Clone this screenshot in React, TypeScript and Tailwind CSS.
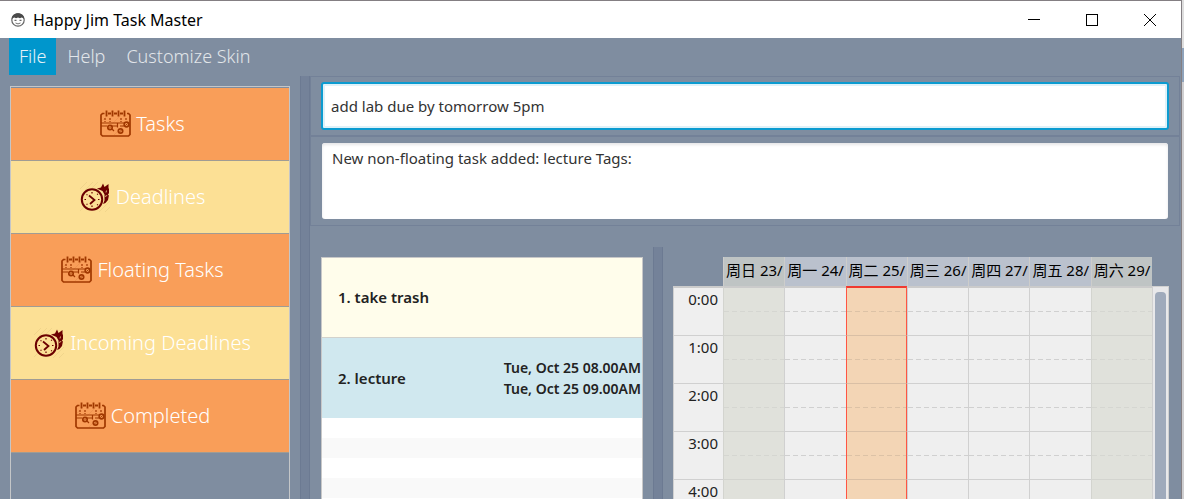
import React, { useState } from "react";

const menus = ["File", "Help", "Customize Skin"];

const categories = [
  { label: "Tasks", icon: "calendar" },
  { label: "Deadlines", icon: "clock" },
  { label: "Floating Tasks", icon: "calendar" },
  { label: "Incoming Deadlines", icon: "clock" },
  { label: "Completed", icon: "calendar" },
];

const days = [
  { label: "周日 23/", kind: "weekend" },
  { label: "周一 24/", kind: "weekday" },
  { label: "周二 25/", kind: "today" },
  { label: "周三 26/", kind: "weekday" },
  { label: "周四 27/", kind: "weekday" },
  { label: "周五 28/", kind: "weekday" },
  { label: "周六 29/", kind: "weekend" },
];

const hours = ["0:00", "1:00", "2:00", "3:00", "4:00"];

const headStyles: Record<string, string> = {
  weekend: "bg-[#bfc4c4] border-[#cdcdcb]",
  weekday: "bg-[#bac1cd] border-[#cdcdcb]",
  today: "bg-[#bac1cd] border-[#cdcdcb]",
};

const cellStyles: Record<string, string> = {
  weekend:
    "bg-[#e0e1db] border-[#d3d4cf] bg-[repeating-linear-gradient(90deg,#d5d6d1_0_5px,transparent_5px_8px)]",
  weekday:
    "bg-[#efefef] border-[#d0d0d0] bg-[repeating-linear-gradient(90deg,#d0d0d0_0_5px,transparent_5px_8px)]",
  today:
    "bg-[#f3d5b5] border-b-[#d9bfa5] border-l-[#ff5544] border-r-[#ff5544] border-r bg-[repeating-linear-gradient(90deg,#dcc2a6_0_5px,transparent_5px_8px)]",
};

const firstRowStyles: Record<string, string> = {
  weekend: "border-t-2 border-t-[#cbcbcb]",
  weekday: "border-t-2 border-t-[#cbcbcb]",
  today: "border-t-2 border-t-[#f03a30]",
};

function FaceIcon() {
  return (
    <svg viewBox="0 0 14 14" className="size-[14px]" aria-hidden="true">
      <circle cx="7" cy="7" r="6.2" fill="#fff" stroke="#666" strokeWidth="1.2" />
      <path d="M0.6 6.500C0.6 2.500 3.500 0.300 7 0.300s6.400 2.200 6.400 6.200L12 5 10.500 4.500 9 5.200 7 4.600 5 5.200 3.500 4.500 2 5Z" fill="#4a4a4a" />
      <path d="M3.500 7.300h2M8.500 7.300h2" stroke="#666" strokeWidth="1.200" />
      <path d="M4.500 10q2.500 1.800 5 0" stroke="#777" fill="none" strokeWidth="1" />
    </svg>
  );
}

function CalendarIcon() {
  return (
    <svg viewBox="0 0 31 30" className="h-[30px] w-[31px] shrink-0" fill="none" stroke="#a03800" aria-hidden="true">
      <path d="M2 12L12 2M7 20L21 6M14 26L28 12" stroke="#ef9551" strokeWidth="1" />
      <path d="M4.500 4.500H2.500L1 6V25.500L2.500 27H28.500L30 25.500V6L28.500 4.500H27" strokeWidth="1.700" />
      <path d="M6.500 1.500v6M12.500 1.500v6M18.500 1.500v6M24.500 1.500v6" strokeWidth="1.800" />
      <path d="M8 4.500h3M14 4.500h3M20 4.500h3" strokeWidth="1.800" />
      <path d="M5 9v4M10 9v4M21 9v4M26 9v3" strokeWidth="1.200" strokeDasharray="2 1" />
      <path d="M1 14H25M1 17H7M12 17H18M17.500 14V18.500M20 17H24M12 20l2 2" strokeWidth="1.200" />
      <circle cx="10" cy="18.500" r="2.200" strokeWidth="1.700" />
      <circle cx="20.500" cy="22" r="2.200" strokeWidth="1.700" />
      <circle cx="26.500" cy="15.500" r="2.300" strokeWidth="1.700" />
      <path d="M9 19.500l2-2M19.500 23l2-2M25.500 16.500l2-2" strokeWidth="0.900" />
    </svg>
  );
}

function ClockIcon() {
  return (
    <svg viewBox="0 0 31 30" className="h-[30px] w-[31px] shrink-0" fill="none" stroke="#6b0000" aria-hidden="true">
      <path d="M0 7L7 0M5 8L13 0M12 6L18 0M0 29L5 24M19 30L30 19M25 30L30 25" stroke="#f1d58b" strokeWidth="1" />
      <circle cx="12" cy="17.500" r="10.200" strokeWidth="2" />
      <path d="M9 13.500L14.500 18L10 22" strokeWidth="1.800" />
      <path d="M12 10v1.500M12 23.500V25M4.500 17.500H6M18 17.500h1.500M6.500 12.500l1 .5M17 12.500l1-.5M6.500 22.500l1-.5M17 22.500l1 .5" strokeWidth="1.200" />
      <path
        d="M17 6.500L21 5.500L23 1.500L24.500 5L28.500 2V7L29 6L29 11L27.500 13.500L29 13L28 18L25.500 21L23 22L24.500 18.500V12.500L22.500 9L19 7.500Z"
        fill="#6b0000"
        stroke="none"
      />
      <path d="M26.500 8.500l-.5 2M26.500 13l-1 2" stroke="#fce095" strokeWidth="0.800" />
    </svg>
  );
}

function TitleBar() {
  const control = "flex h-full w-[58px] items-center justify-center";
  return (
    <header className="flex h-[38px] shrink-0 items-center border-t border-[#847f83] bg-white pr-[2px] pl-[11px]">
      <FaceIcon />
      <h1 className="ml-2 flex-1 text-base text-black">Happy Jim Task Master</h1>
      <button type="button" aria-label="Minimize" className={control}>
        <svg viewBox="0 0 12 12" className="size-3" stroke="#000" shapeRendering="crispEdges"><path d="M0 5.500h12" /></svg>
      </button>
      <button type="button" aria-label="Maximize" className={control}>
        <svg viewBox="0 0 12 12" className="size-3" stroke="#000" fill="none" shapeRendering="crispEdges"><path d="M.5.5h11v11H.5z" /></svg>
      </button>
      <button type="button" aria-label="Close" className={control}>
        <svg viewBox="0 0 12 12" className="size-3" stroke="#000"><path d="M0 0l12 12M12 0L0 12" /></svg>
      </button>
    </header>
  );
}

function Sidebar() {
  return (
    <nav className="mx-[10px] mt-[10px] w-[280px] shrink-0 border border-b-0 border-[#c4c6c8] pt-px">
      {categories.map(({ label, icon }, i) => (
        <button
          key={label}
          type="button"
          className={`flex h-[73px] w-full items-center justify-center gap-[5px] border-b border-[#a09c94] pr-[15px] text-xl font-light text-white ${
            i % 2 ? "bg-[#fce095]" : "bg-[#f99e59]"
          }`}
        >
          {icon === "clock" ? <ClockIcon /> : <CalendarIcon />}
          {label}
        </button>
      ))}
    </nav>
  );
}

function TaskList() {
  return (
    <ul className="mt-[31px] mr-[10px] ml-[11px] w-[322px] shrink-0 border border-b-0 border-[#c8c8c8] bg-[repeating-linear-gradient(#fff_0_20px,#f9f9f9_20px_40px)] text-[15px] font-semibold text-[#222]">
      <li className="flex h-20 items-center border-b border-[#d2d2cc] bg-[#fffdeb] pl-4">1. take trash</li>
      <li className="flex h-20 items-center justify-between bg-[#d0e8ef] pr-px pl-4">
        <span>2. lecture</span>
        <span className="text-sm leading-[21px]">
          Tue, Oct 25 08.00AM
          <br />
          Tue, Oct 25 09.00AM
        </span>
      </li>
    </ul>
  );
}

function WeekCalendar() {
  return (
    <section className="mt-[31px] mr-3 ml-[10px] flex min-w-0 flex-1">
      <div className="min-w-0 flex-1">
        <table className="w-full table-fixed border-separate border-spacing-0">
          <thead>
            <tr className="h-[29px]">
              <td className="w-[50px]" />
              {days.map(({ label, kind }) => (
                <th
                  key={label}
                  scope="col"
                  className={`border-l p-0 pl-[2px] text-left align-top text-[15px] leading-[26px] font-normal whitespace-nowrap text-black ${headStyles[kind]}`}
                >
                  {label}
                </th>
              ))}
            </tr>
          </thead>
          <tbody>
            {hours.map((hour, i) => (
              <tr key={hour} className={i === 0 ? "h-[50px]" : "h-12"}>
                <th
                  scope="row"
                  className={`border-b border-l border-[#d0d0d0] bg-[#efefef] p-0 pt-px pr-[5px] text-right align-top text-[15px] leading-5 font-normal text-[#222] ${i === 0 ? "border-t-2 border-t-[#cbcbcb]" : ""}`}
                >
                  {hour}
                </th>
                {days.map(({ label, kind }) => (
                  <td
                    key={label}
                    className={`border-b border-l bg-[length:100%_1px] bg-[position:left_bottom_23px] bg-no-repeat p-0 ${cellStyles[kind]} ${
                      i === 0 ? firstRowStyles[kind] : ""
                    }`}
                  />
                ))}
              </tr>
            ))}
          </tbody>
        </table>
      </div>
      <div className="mt-[29px] w-[17px] shrink-0 border-t border-r border-l border-[#d0d0d0] bg-[#e8e8ea] px-[2px] pt-[5px]">
        <div className="h-full rounded-t-sm bg-[#9faabb]" />
      </div>
    </section>
  );
}

export default function App() {
  const [command, setCommand] = useState("add lab due by tomorrow 5pm");
  return (
    <div className="flex h-screen overflow-hidden bg-[#cfcfd1] font-['Noto_Sans','Noto_Sans_CJK_SC',sans-serif]">
      <div className="flex min-w-0 flex-1 flex-col border-r border-[#847f83] bg-[#7f8da0]">
        <TitleBar />
        <div role="menubar" className="flex h-[38px] shrink-0 items-start gap-px pl-[9px]">
          {menus.map((menu, i) => (
            <button
              key={menu}
              type="button"
              role="menuitem"
              className={`h-[37px] px-[10px] pb-[2px] text-lg font-light ${i === 0 ? "bg-[#0096cc] text-[#e4f2f8]" : "text-[#e2e6ea]"}`}
            >
              {menu}
            </button>
          ))}
        </div>
        <div className="flex min-h-0 flex-1">
          <Sidebar />
          <div className="w-[10px] shrink-0 border-x border-[#6c7a92] bg-[#748299]" />
          <main className="flex min-w-0 flex-1 flex-col">
            <div className="mr-px h-[60px] shrink-0 border border-[#738198] px-[10px] py-[5px]">
              <input
                type="text"
                aria-label="Command"
                value={command}
                onChange={(e) => setCommand(e.target.value)}
                className="block h-12 w-full rounded-[3px] border-2 border-[#0c9bd0] bg-white px-2 text-[15px] text-[#333] ring-2 ring-[#dff1f8] outline-none ring-inset"
              />
            </div>
            <div className="mr-px h-[90px] shrink-0 border border-[#738198] px-[11px] py-[6px]">
              <textarea
                readOnly
                aria-label="Result"
                value="New non-floating task added: lecture Tags:"
                className="block h-[76px] w-full resize-none rounded-[3px] bg-white px-[10px] py-[3px] text-[15px] leading-6 text-[#333] inset-shadow-[0_2px_3px_#e6e6e8] outline-none"
              />
            </div>
            <div className="flex min-h-0 flex-1">
              <TaskList />
              <div className="mt-[21px] w-[10px] shrink-0 border-x border-[#6c7a92] bg-[#748299]" />
              <WeekCalendar />
            </div>
          </main>
        </div>
      </div>
      <div className="flex w-[2px] shrink-0 flex-col">
        <div className="h-12 bg-[#dedede]" />
        <div className="h-[34px] bg-[#8fa3bb]" />
      </div>
    </div>
  );
}
